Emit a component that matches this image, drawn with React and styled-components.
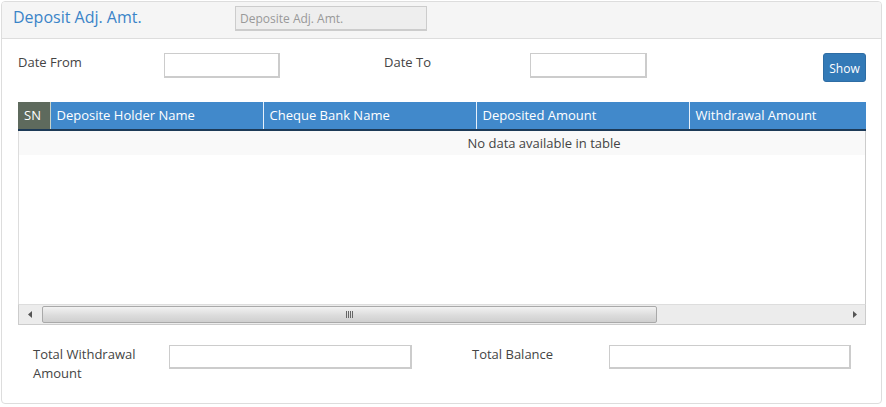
import React from "react"
import styled, { createGlobalStyle } from "styled-components"

const Global = createGlobalStyle`
    body {
        margin: 0;
        background: #ffffff;
        font-family: "Open Sans", "Liberation Sans", sans-serif;
        font-size: 13px;
        color: #333;
    }
`

const Panel = styled.div`
    margin: 1px 0 0 1px;
    width: 881px;
    height: 403px;
    box-sizing: border-box;
    border: 1px solid #dddddd;
    border-radius: 4px;
    background: #fff;
    overflow: hidden;
`

const PanelHead = styled.div`
    height: 37px;
    box-sizing: border-box;
    background: #f5f5f5;
    border-bottom: 1px solid #dddddd;
    display: flex;
    align-items: center;
    padding-left: 11px;
`

const Title = styled.div`
    width: 222px;
    font-size: 16px;
    color: #3a84c8;
    margin-top: -6px;
`

const HeadInput = styled.input`
    width: 192px;
    height: 25px;
    box-sizing: border-box;
    margin-top: -3px;
    border: 1px solid #cccccc;
    border-bottom-width: 2px;
    background: #eeeeee;
    font-family: inherit;
    font-size: 12px;
    padding: 0 4px;
    &::placeholder { color: #999; }
`

const PanelBody = styled.div`
    padding: 14px 15px 0 16px;
`

const FilterRow = styled.div`
    display: grid;
    grid-template-columns: 146px 220px 146px 1fr 43px;
    align-items: start;
    height: 49px;
`

const Label = styled.div`
    color: #444;
    font-size: 13px;
    line-height: 19px;
`

const TextBox = styled.input`
    width: ${p => p.$w}px;
    height: ${p => p.$h || 25}px;
    box-sizing: border-box;
    border: 1px solid #cccccc;
    border-bottom-width: 2px;
    border-right-width: 2px;
    background: #fff;
    margin: 0;
`

const ShowBtn = styled.button`
    width: 43px;
    height: 29px;
    background: #337ab7;
    border: 1px solid #2e6da4;
    border-radius: 3px;
    color: #fff;
    font-family: inherit;
    font-size: 12px;
    padding: 2px 0 0;
`

const TableWrap = styled.div`
    width: 848px;
    overflow: hidden;
`

const Table = styled.table`
    border-collapse: collapse;
    table-layout: fixed;
    width: 1050px;
`

const Th = styled.th`
    width: ${p => p.$w}px;
    height: 28px;
    background: ${p => (p.$dark ? "#5e6a5d" : "#4189cb")};
    color: #fff;
    font-weight: normal;
    font-size: 13px;
    text-align: left;
    padding: 0 0 2px 6px;
    border-right: 1px solid ${p => (p.$dark ? "#c9d3c9" : "#e6f0fa")};
    border-bottom: 2px solid #1d3a57;
    white-space: nowrap;
    box-sizing: border-box;
`

const ScrollBody = styled.div`
    height: 173px;
    box-sizing: border-box;
    border-left: 1px solid #dddddd;
    border-right: 1px solid #cccccc;
    width: 848px;
    background: #fff;
    overflow: hidden;
`

const EmptyRow = styled.div`
    width: 1050px;
    height: 24px;
    background: #f9f9f9;
    text-align: center;
    line-height: 24px;
    color: #444;
    font-size: 13px;
`

const ScrollBar = styled.div`
    width: 848px;
    height: 21px;
    box-sizing: border-box;
    border: 1px solid #cccccc;
    border-top-color: #dddddd;
    background: #ececec;
    display: flex;
    align-items: center;
`

const Arrow = styled.div`
    width: 21px;
    display: flex;
    justify-content: center;
    align-items: center;
`

const Thumb = styled.div`
    width: 615px;
    height: 17px;
    box-sizing: border-box;
    margin-left: 2px;
    border: 1px solid #a9a9a9;
    border-radius: 2px;
    background: linear-gradient(#f2f2f2, #dcdcdc 55%, #cfcfcf);
    display: flex;
    justify-content: center;
    align-items: center;
    gap: 1px;
`

const Grip = styled.span`
    width: 1px;
    height: 7px;
    background: #666;
`

const Track = styled.div`
    flex: 1;
`

const TotalsRow = styled.div`
    display: grid;
    grid-template-columns: 136px 243px 60px 137px 242px;
    padding: 20px 0 0 31px;
`

const cols = [
    ["SN", 32, true],
    ["Deposite Holder Name", 213],
    ["Cheque Bank Name", 213],
    ["Deposited Amount", 213],
    ["Withdrawal Amount", 213],
    ["", 166],
]

export default function App() {
    return (
        <>
            <Global />
            <Panel>
                <PanelHead>
                    <Title>Deposit Adj. Amt.</Title>
                    <HeadInput placeholder="Deposite Adj. Amt." />
                </PanelHead>
                <PanelBody>
                    <FilterRow>
                        <Label>Date From</Label>
                        <TextBox $w={116} />
                        <Label>Date To</Label>
                        <TextBox $w={117} />
                        <ShowBtn>Show</ShowBtn>
                    </FilterRow>
                    <TableWrap>
                        <Table>
                            <thead>
                                <tr>
                                    {cols.map((c, i) => (
                                        <Th key={"th_" + i} $w={c[1]} $dark={c[2]}>{c[0]}</Th>
                                    ))}
                                </tr>
                            </thead>
                        </Table>
                    </TableWrap>
                    <ScrollBody>
                        <EmptyRow>No data available in table</EmptyRow>
                    </ScrollBody>
                    <ScrollBar>
                        <Arrow>
                            <svg width="4" height="7" viewBox="0 0 4 7"><path d="M4 0L0 3.5L4 7Z" fill="#555" /></svg>
                        </Arrow>
                        <Thumb>
                            <Grip /><Grip /><Grip /><Grip />
                        </Thumb>
                        <Track />
                        <Arrow>
                            <svg width="4" height="7" viewBox="0 0 4 7"><path d="M0 0L4 3.5L0 7Z" fill="#555" /></svg>
                        </Arrow>
                    </ScrollBar>
                </PanelBody>
                <TotalsRow>
                    <Label>Total Withdrawal<br />Amount</Label>
                    <TextBox $w={243} $h={24} />
                    <span />
                    <Label>Total Balance</Label>
                    <TextBox $w={242} $h={24} />
                </TotalsRow>
            </Panel>
        </>
    )
}
